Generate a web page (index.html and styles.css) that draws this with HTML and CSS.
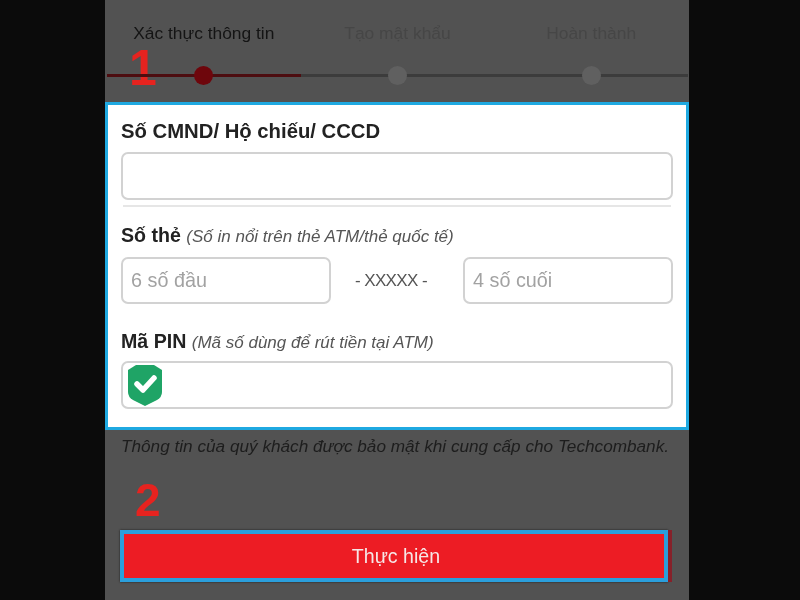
FILE: index.html
```html
<!DOCTYPE html>
<html lang="vi">
<head>
<meta charset="utf-8">
<title>Xác thực thông tin</title>
<link rel="stylesheet" href="styles.css">
</head>
<body>
<main class="phone">
  <div class="steps">
    <span class="mark mark-one">1</span>
    <div class="step step-active">
      <div class="step-name">Xác thực thông tin</div>
      <div class="track"><span class="dot"></span></div>
    </div>
    <div class="step">
      <div class="step-name">Tạo mật khẩu</div>
      <div class="track"><span class="dot"></span></div>
    </div>
    <div class="step">
      <div class="step-name">Hoàn thành</div>
      <div class="track"><span class="dot"></span></div>
    </div>
  </div>

  <form class="card">
    <label class="label label-first">Số CMND/ Hộ chiếu/ CCCD</label>
    <div class="input input-full"></div>
    <div class="divider"></div>
    <label class="label label-card">Số thẻ <em>(Số in nổi trên thẻ ATM/thẻ quốc tế)</em></label>
    <div class="card-row">
      <div class="input input-part">6 số đầu</div>
      <div class="mask">- XXXXX -</div>
      <div class="input input-part">4 số cuối</div>
    </div>
    <label class="label label-pin">Mã PIN <em>(Mã số dùng để rút tiền tại ATM)</em></label>
    <div class="input input-full input-pin">
      <svg class="shield" viewBox="0 0 34 41" aria-hidden="true">
        <path class="shield-body" d="M8 0 H26 L34 5 V27 Q34 32 29 35 L17 41 L5 35 Q0 32 0 27 V5 Z"/>
        <path class="shield-check" d="M9 19 L15 25 L26 13"/>
      </svg>
    </div>
  </form>

  <p class="note">Thông tin của quý khách được bảo mật khi cung cấp cho Techcombank.</p>
  <div class="mark mark-two">2</div>
  <div class="action">
    <button type="button" class="submit">Thực hiện</button>
    <span class="edge"></span>
  </div>
</main>
</body>
</html>
```
FILE: styles.css
```css
* {
  box-sizing: border-box;
}

html,
body {
  margin: 0;
  height: 100%;
}

body {
  background: #0b0b0b;
  font-family: "Liberation Sans", Arial, sans-serif;
  overflow: hidden;
}

.phone {
  width: 584px;
  height: 600px;
  margin-left: 105px;
  background: #525252;
  filter: blur(0.45px);
}

.steps {
  position: relative;
  display: grid;
  grid-template-columns: repeat(3, 1fr);
  height: 102px;
  padding: 24px 1px 0 2px;
}

.step-name {
  height: 18px;
  font-size: 17.4px;
  line-height: 18px;
  text-align: center;
  color: #464646;
}

.step-active .step-name {
  color: #141414;
}

.track {
  position: relative;
  height: 3px;
  margin-top: 32px;
  background: #3c3c3c;
}

.step-active .track {
  background: #4d0d10;
}

.dot {
  position: absolute;
  left: 50%;
  top: -8px;
  width: 19px;
  height: 19px;
  margin-left: -9.5px;
  border-radius: 50%;
  background: #606060;
}

.step-active .dot {
  background: #6e060c;
}

.mark {
  font-weight: 700;
  color: #e6231f;
}

.mark-one {
  position: absolute;
  left: 24px;
  top: 43px;
  font-size: 50px;
  line-height: 50px;
}

.card {
  height: 328px;
  padding: 0 13px;
  background: #fff;
  border: 3px solid #1fa9e1;
}

.label {
  display: block;
  font-size: 20.3px;
  font-weight: 700;
  line-height: 22px;
  color: #222;
}

.label em {
  font-size: 17px;
  font-weight: 400;
  color: #555;
}

.label-first {
  margin-top: 15px;
}

.label-card {
  margin-top: 17px;
  font-size: 19.6px;
}

.label-pin {
  margin-top: 26px;
  font-size: 19.6px;
}

.input {
  background: #fff;
  border: 2px solid #d2d2d2;
  border-radius: 7px;
}

.input-full {
  width: 552px;
  height: 48px;
  margin-top: 10px;
}

.divider {
  width: 548px;
  height: 2px;
  margin: 5px 0 0 2px;
  background: #e6e6e6;
}

.card-row {
  display: grid;
  grid-template-columns: 210px 1fr 210px;
  align-items: center;
  width: 552px;
  margin-top: 9px;
}

.input-part {
  height: 47px;
  padding-left: 8px;
  font-size: 19.8px;
  line-height: 43px;
  color: #a2a2a2;
}

.mask {
  padding-right: 12px;
  font-size: 17px;
  letter-spacing: -0.6px;
  text-align: center;
  color: #555;
}

.input-pin {
  position: relative;
  margin-top: 7px;
}

.shield {
  position: absolute;
  left: 5px;
  top: 2px;
  width: 34px;
  height: 41px;
}

.shield-body {
  fill: #1fa466;
}

.shield-check {
  fill: none;
  stroke: #fff;
  stroke-width: 5.5;
  stroke-linecap: round;
  stroke-linejoin: round;
}

.note {
  margin: 7px 0 0 16px;
  font-size: 17.2px;
  font-style: italic;
  line-height: 19px;
  color: #1d1d1d;
}

.mark-two {
  margin: 18px 0 0 30px;
  font-size: 46px;
  line-height: 52px;
}

.action {
  display: flex;
  width: 552px;
  margin: 4px 0 0 15px;
}

.submit {
  width: 548px;
  height: 52px;
  padding: 0 0 0 4px;
  border: 4px solid #2b9fdc;
  background: #ed1c24;
  color: #f6e6e6;
  font-family: inherit;
  font-size: 19.6px;
  box-shadow: 0 0 2px #1c1c1c;
}

.edge {
  width: 4px;
  background: #86212a;
}
```
